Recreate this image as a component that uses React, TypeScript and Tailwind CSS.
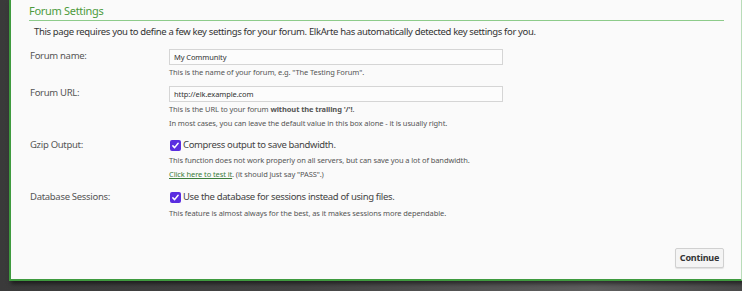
import React from 'react';

const Check: React.FC = () => (
  <span className="inline-flex h-[11px] w-[11px] shrink-0 items-center justify-center rounded-[2px] bg-[#5a2de0]">
    <svg viewBox="0 0 12 12" className="h-[9px] w-[9px]" fill="none" stroke="#ffffff" strokeWidth={2}>
      <path d="M2.5 6.5l2.3 2.3L9.5 3" strokeLinecap="round" strokeLinejoin="round" />
    </svg>
  </span>
);

const Row: React.FC<{ label: string; children: React.ReactNode; className?: string }> = ({ label, children, className }) => (
  <div className={`flex ${className ?? ''}`}>
    <div className="w-[139px] shrink-0 text-[9.5px] leading-[14px] tracking-[-0.3px] text-[#555]">{label}</div>
    <div className="flex-1">{children}</div>
  </div>
);

const help = 'text-[7.5px] leading-[11px] tracking-[-0.1px] text-[#555]';
const input = 'h-[16px] w-[334px] border border-[#d5d5d5] bg-[#fcfcfc] pl-[4px] text-[7.5px] leading-[14px] tracking-[-0.1px] text-[#333]';

export default function App() {
  return (
    <div className="h-[291px] w-[742px] overflow-hidden bg-[linear-gradient(90deg,#3a3a3a_0%,#444_40%,#5f5f5f_80%,#4a4a4a_100%)]" style={{ fontFamily: '"Noto Sans", "Open Sans", sans-serif' }}>
      <div className="ml-[9px] flex h-[281px] flex-col border-b-[2px] border-l-[2px] border-r border-b-[#3f9a3f] border-l-[#3f9a3f] border-r-[#b9dcb9] bg-[#fafafa] shadow-[2px_3px_4px_rgba(0,0,0,0.5)]">
        <div className="pl-[18px] pr-[17px] pt-[3px]">
          <h2 className="border-b border-[#8dcb8a] pb-[1px] text-[11px] leading-[16px] tracking-[-0.3px] text-[#4c9a3c]">Forum Settings</h2>
          <p className="mt-[4px] pl-[5px] text-[9.5px] leading-[14px] tracking-[-0.35px] text-[#333]">
            This page requires you to define a few key settings for your forum. ElkArte has automatically detected key settings for you.
          </p>
        </div>

        <div className="mt-[10px] flex flex-col pl-[19px] pr-[18px]">
          <Row label="Forum name:">
            <div className={input}>My Community</div>
            <p className={`mt-[2px] ${help}`}>This is the name of your forum, e.g. "The Testing Forum".</p>
          </Row>

          <Row label="Forum URL:" className="mt-[8px]">
            <div className={input}>http://elk.example.com</div>
            <p className={`mt-[2px] ${help}`}>
              This is the URL to your forum <b>without the trailing '/'!</b>.
            </p>
            <p className={`mt-[3px] ${help}`}>In most cases, you can leave the default value in this box alone - it is usually right.</p>
          </Row>

          <Row label="Gzip Output:" className="mt-[9px]">
            <div className="flex items-center gap-[2px] pl-[1px] text-[9.5px] leading-[14px] tracking-[-0.35px] text-[#444]">
              <Check />
              <span>Compress output to save bandwidth.</span>
            </div>
            <p className={`mt-[3px] ${help}`}>This function does not work properly on all servers, but can save you a lot of bandwidth.</p>
            <p className={`mt-[3px] ${help}`}>
              <a className="text-[#3d7d3d] underline">Click here to test it</a>. (it should just say "PASS".)
            </p>
          </Row>

          <Row label="Database Sessions:" className="mt-[10px]">
            <div className="flex items-center gap-[2px] pl-[1px] text-[9.5px] leading-[14px] tracking-[-0.35px] text-[#444]">
              <Check />
              <span>Use the database for sessions instead of using files.</span>
            </div>
            <p className={`mt-[4px] ${help}`}>This feature is almost always for the best, as it makes sessions more dependable.</p>
          </Row>
        </div>

        <div className="mt-auto flex justify-end pb-[11px] pr-[17px]">
          <button className="h-[20px] w-[49px] rounded-[2px] border border-[#d0d0d0] bg-[#f4f4f4] text-[9px] font-bold leading-[18px] tracking-[-0.2px] text-[#333] shadow-[0_1px_1px_rgba(0,0,0,0.1)]">
            Continue
          </button>
        </div>
      </div>
    </div>
  );
}
